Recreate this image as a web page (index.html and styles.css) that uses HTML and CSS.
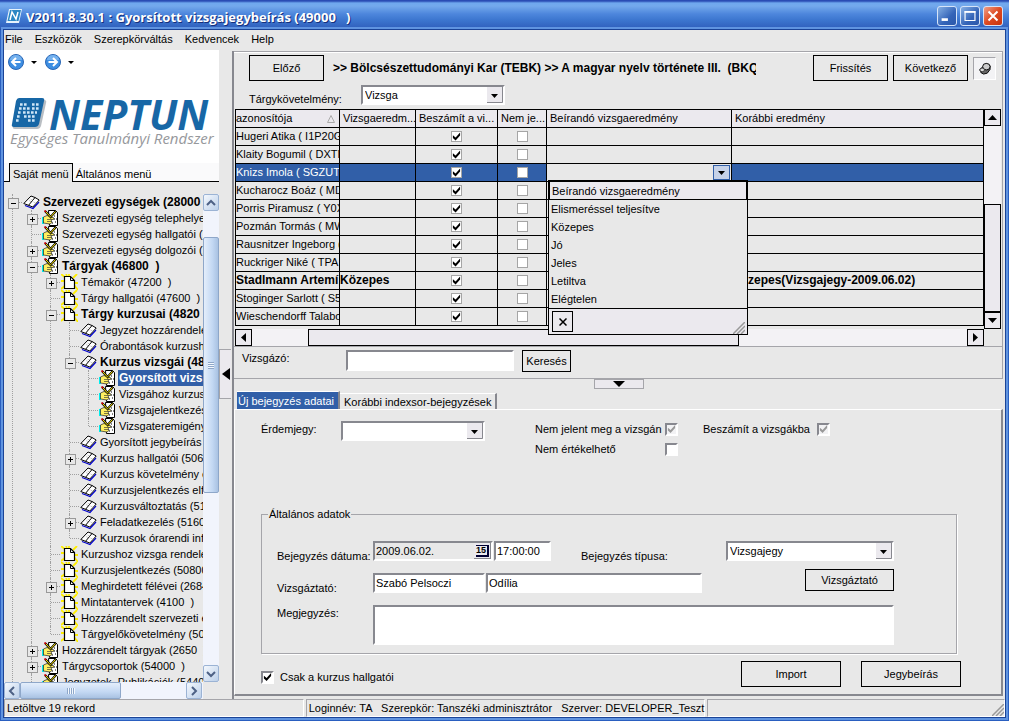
FILE: index.html
```html
<!DOCTYPE html>
<html lang="hu">
<head>
<meta charset="utf-8">
<title>Gyorsított vizsgajegybeírás</title>
<link rel="stylesheet" href="styles.css">
</head>
<body>
<svg class="defs" aria-hidden="true">
  <symbol id="book" viewBox="0 0 17 16">
    <path d="M1 9.500 8.500 2l4 1.500 4 2.500L10 13.500l-4-2z" fill="#fff"/>
    <path d="M2 11.500l4 1.500 4 1.500L16 8" fill="none" stroke="#00c" stroke-width="1.200"/>
    <path d="M.8 9.500 8 2l4 1.500 4.200 2.500L9.800 13 6 11.500zM12 3.500 5.800 11" fill="none" stroke="#000"/>
    <path d="M7.500 5l2 1M6 6.500l2 1M10.500 8l2 1" stroke="#ccc" fill="none"/>
  </symbol>
  <symbol id="sheet" viewBox="0 0 17 16">
    <path d="M0 0l5 4M12 4l4-4M0 7h4M14 9h3M0 15l5-4M13 11l4 5M8 0v2M5 0l1 2" stroke="#ffee00" stroke-width="1.800"/>
    <path d="M3.500 2.500h6l4 4v8h-10z" fill="#fff" stroke="#000" stroke-width="1.200"/>
    <path d="M9.500 2.500v4h4" fill="none" stroke="#000"/>
  </symbol>
  <symbol id="hand" viewBox="0 0 17 16">
    <path d="M6.500.5h7l2 2v13h-8z" fill="#fff" stroke="#000"/>
    <path d="M12 6h2M12 9h3M10 13h2M13 12h2" stroke="#000" stroke-dasharray="1 1"/>
    <path d="M0 7h2v7H0z" fill="#0ee"/>
    <path d="M1.500 7 5 5.500l7 2.500-.5 1.500H9l1 3-2 1.500-6.500-1z" fill="#ffef60" stroke="#222" stroke-width=".7"/>
    <path d="M5 9.500h4M5 11.500h5" stroke="#443" stroke-width=".7"/>
    <path d="M3 1l6.500 7M14 1 8.500 7" stroke="#000" stroke-width="2.200"/>
    <path d="M4 2l5 5.500M13.500 1.500 9 6.500" stroke="#ffe800"/>
    <path d="M2.500.5 4 2" stroke="#d00" stroke-width="1.500"/>
  </symbol>
</svg>

<header class="titlebar">
  <svg class="app-icon" viewBox="0 0 16 14" aria-hidden="true"><path d="M3 0h13l-3 14H0z" fill="#e6f3fc"/><path d="M4 1h11l-2.500 11H1.500z" fill="#2b87c4"/><path d="M4 11 6 3l4 7 2-7" fill="none" stroke="#fff" stroke-width="1.500"/></svg>
  <h1 class="title">V2011.8.30.1 : Gyorsított vizsgajegybeírás (49000   )</h1>
  <button class="win-btn" aria-label="Kis méret"><svg viewBox="0 0 20 20"><path d="M4 14h7" stroke="#fff" stroke-width="3"/></svg></button>
  <button class="win-btn" aria-label="Teljes méret"><svg viewBox="0 0 20 20"><path d="M4.500 5h11v10h-11z" fill="none" stroke="#fff" stroke-width="1.300"/><path d="M4 5.500h12" stroke="#fff" stroke-width="2"/></svg></button>
  <button class="win-btn close" aria-label="Bezárás"><svg viewBox="0 0 20 20"><path d="M5 5l10 10M15 5 5 15" stroke="#fff" stroke-width="2.200"/></svg></button>
</header>

<div class="window">
  <nav class="menubar"><a href="#">File</a><a href="#">Eszközök</a><a href="#">Szerepkörváltás</a><a href="#">Kedvencek</a><a href="#">Help</a></nav>

  <div class="workspace">
    <aside class="sidebar">
      <div class="brand">
        <div class="history">
          <button class="round" aria-label="Vissza"><svg viewBox="0 0 16 16"><circle cx="8" cy="8" r="7.500" fill="#3d8ee2" stroke="#2a66b5"/><path d="M2 6a6 5 0 0 1 12 0" fill="#8cc0f4" opacity=".7"/><path d="M12.500 8H4.500M8 4 4 8l4 4" fill="none" stroke="#fff" stroke-width="2"/></svg></button>
          <span class="caret"></span>
          <button class="round" aria-label="Előre"><svg viewBox="0 0 16 16"><circle cx="8" cy="8" r="7.500" fill="#3d8ee2" stroke="#2a66b5"/><path d="M2 6a6 5 0 0 1 12 0" fill="#8cc0f4" opacity=".7"/><path d="M3.500 8h8M8 4l4 4-4 4" fill="none" stroke="#fff" stroke-width="2"/></svg></button>
          <span class="caret"></span>
        </div>
        <div class="logo">
          <svg viewBox="0 0 36 32" aria-hidden="true">
            <path d="M9 2h24q3 0 2 3l-5 23q-1 3-4 3H4q-3 0-2-3L6 5q1-3 3-3z" fill="#b9bec3"/>
            <path d="M8 0h23q3 0 2 3l-5 23q-1 3-4 3H3q-3 0-2-3L5 3q1-3 3-3z" fill="#1767a6"/>
            <g stroke="#cfe6f7" stroke-width="2.600" stroke-dasharray="2.600 1.400"><path d="M9 6.500h7M21 6.500h7M8 10.500h11M21 10.500h7M7 14.500h3M12 14.500h14M6 18.500h3M13 18.500h12M5 22.500h3M17 22.500h7"/></g>
          </svg>
          <span class="wordmark">NEPTUN</span>
        </div>
        <div class="tagline">Egységes Tanulmányi Rendszer</div>
      </div>
      <div class="side-tabs"><button class="side-tab active">Saját menü</button><button class="side-tab">Általános menü</button></div>
      <div class="tree-frame">
        <div class="tree-view">
          <ul class="tree">
            <li><div class="node bold"><span class="box minus"></span><svg><use href="#book"/></svg><a href="#">Szervezeti egységek (28000</a></div>
              <ul>
                <li><div class="node"><span class="box plus"></span><svg><use href="#hand"/></svg><a href="#">Szervezeti egység telephelyei</a></div></li>
                <li><div class="node"><span class="box"></span><svg><use href="#hand"/></svg><a href="#">Szervezeti egység hallgatói (2</a></div></li>
                <li><div class="node"><span class="box plus"></span><svg><use href="#hand"/></svg><a href="#">Szervezeti egység dolgozói (2</a></div></li>
                <li><div class="node bold"><span class="box minus"></span><svg><use href="#hand"/></svg><a href="#">Tárgyak (46800  )</a></div>
                  <ul>
                    <li><div class="node"><span class="box plus"></span><svg><use href="#sheet"/></svg><a href="#">Témakör (47200  )</a></div></li>
                    <li><div class="node"><span class="box"></span><svg><use href="#sheet"/></svg><a href="#">Tárgy hallgatói (47600  )</a></div></li>
                    <li><div class="node bold"><span class="box minus"></span><svg><use href="#sheet"/></svg><a href="#">Tárgy kurzusai (4820</a></div>
                      <ul>
                        <li><div class="node"><span class="box"></span><svg><use href="#book"/></svg><a href="#">Jegyzet hozzárendelé</a></div></li>
                        <li><div class="node"><span class="box"></span><svg><use href="#book"/></svg><a href="#">Órabontások kurzush</a></div></li>
                        <li><div class="node bold"><span class="box minus"></span><svg><use href="#book"/></svg><a href="#">Kurzus vizsgái (48</a></div>
                          <ul>
                            <li><div class="node bold selected"><span class="box"></span><svg><use href="#hand"/></svg><a href="#">Gyorsított vizs</a></div></li>
                            <li><div class="node"><span class="box"></span><svg><use href="#hand"/></svg><a href="#">Vizsgához kurzus</a></div></li>
                            <li><div class="node"><span class="box"></span><svg><use href="#hand"/></svg><a href="#">Vizsgajelentkezés</a></div></li>
                            <li><div class="node"><span class="box"></span><svg><use href="#hand"/></svg><a href="#">Vizsgateremigény</a></div></li>
                          </ul>
                        </li>
                        <li><div class="node"><span class="box"></span><svg><use href="#book"/></svg><a href="#">Gyorsított jegybeírás</a></div></li>
                        <li><div class="node"><span class="box plus"></span><svg><use href="#book"/></svg><a href="#">Kurzus hallgatói (5060</a></div></li>
                        <li><div class="node"><span class="box"></span><svg><use href="#book"/></svg><a href="#">Kurzus követelmény e</a></div></li>
                        <li><div class="node"><span class="box"></span><svg><use href="#book"/></svg><a href="#">Kurzusjelentkezés elf</a></div></li>
                        <li><div class="node"><span class="box"></span><svg><use href="#book"/></svg><a href="#">Kurzusváltoztatás (51</a></div></li>
                        <li><div class="node"><span class="box plus"></span><svg><use href="#book"/></svg><a href="#">Feladatkezelés (5160</a></div></li>
                        <li><div class="node"><span class="box"></span><svg><use href="#book"/></svg><a href="#">Kurzusok órarendi inf</a></div></li>
                      </ul>
                    </li>
                    <li><div class="node"><span class="box"></span><svg><use href="#sheet"/></svg><a href="#">Kurzushoz vizsga rendelé</a></div></li>
                    <li><div class="node"><span class="box"></span><svg><use href="#sheet"/></svg><a href="#">Kurzusjelentkezés (50800</a></div></li>
                    <li><div class="node"><span class="box plus"></span><svg><use href="#sheet"/></svg><a href="#">Meghirdetett félévei (2684</a></div></li>
                    <li><div class="node"><span class="box"></span><svg><use href="#sheet"/></svg><a href="#">Mintatantervek (4100  )</a></div></li>
                    <li><div class="node"><span class="box"></span><svg><use href="#sheet"/></svg><a href="#">Hozzárendelt szervezeti e</a></div></li>
                    <li><div class="node"><span class="box"></span><svg><use href="#sheet"/></svg><a href="#">Tárgyelőkövetelmény (50</a></div></li>
                  </ul>
                </li>
                <li><div class="node"><span class="box plus"></span><svg><use href="#hand"/></svg><a href="#">Hozzárendelt tárgyak (2650  )</a></div></li>
                <li><div class="node"><span class="box plus"></span><svg><use href="#hand"/></svg><a href="#">Tárgycsoportok (54000  )</a></div></li>
                <li><div class="node"><span class="box"></span><svg><use href="#hand"/></svg><a href="#">Jegyzetek, Publikációk (5440</a></div></li>
                <li></li>
              </ul>
            </li>
            <li></li>
          </ul>
        </div>
        <div class="xp-v">
          <button class="xp-btn" aria-label="Fel"><svg viewBox="0 0 10 10"><path d="M1 7l4-4 4 4" fill="none" stroke="#4d6185" stroke-width="2"/></svg></button>
          <div class="xp-gap-top"></div>
          <div class="xp-thumb-v"><i></i></div>
          <div class="xp-rest"></div>
          <button class="xp-btn" aria-label="Le"><svg viewBox="0 0 10 10"><path d="M1 3l4 4 4-4" fill="none" stroke="#4d6185" stroke-width="2"/></svg></button>
        </div>
        <div class="xp-h">
          <button class="xp-btn" aria-label="Balra"><svg viewBox="0 0 10 10"><path d="M7 1 3 5l4 4" fill="none" stroke="#4d6185" stroke-width="2"/></svg></button>
          <div class="xp-thumb-h"><i></i></div>
          <div class="xp-rest"></div>
          <button class="xp-btn" aria-label="Jobbra"><svg viewBox="0 0 10 10"><path d="M3 1l4 4-4 4" fill="none" stroke="#4d6185" stroke-width="2"/></svg></button>
        </div>
      </div>
    </aside>

    <div class="splitter"><button class="split-left" aria-label="Menü elrejtése"><svg viewBox="0 0 8 12"><path d="M8 0v12L0 6z"/></svg></button></div>

    <main class="content">
      <section class="upper">
        <div class="toolbar">
          <button class="btn tall">Előző</button>
          <strong class="path">&gt;&gt; Bölcsészettudományi Kar (TEBK) &gt;&gt; A magyar nyelv története III.  (BKQ</strong>
          <button class="btn tall">Frissítés</button>
          <button class="btn tall">Következő</button>
          <button class="pin" aria-label="Rögzítés"><svg viewBox="0 0 14 14"><path d="M2 8q0 4 4 5l4-1 3-4V4L9 2z" fill="#666" stroke="#000"/><ellipse cx="9" cy="5" rx="4" ry="3.500" fill="#ccc" stroke="#000"/><ellipse cx="4.500" cy="8.500" rx="2.500" ry="2" fill="#ddd" stroke="#333"/></svg></button>
        </div>
        <div class="filter"><label for="req">Tárgykövetelmény:</label><select id="req" class="combo"><option>Vizsga</option></select></div>

        <div class="grid-frame">
          <table class="grid">
            <colgroup><col class="c1"><col class="c2"><col class="c3"><col class="c4"><col class="c5"><col></colgroup>
            <thead><tr><th class="sorted">azonosítója<svg viewBox="0 0 8 8" aria-hidden="true"><path d="M.5 7.500h7L4 .5z" fill="none" stroke="#aaa"/></svg></th><th>Vizsgaeredm...</th><th>Beszámít a vi...</th><th>Nem je...</th><th>Beírandó vizsgaeredmény</th><th>Korábbi eredmény</th></tr></thead>
            <tbody>
              <tr><td>Hugeri Atika ( I1P20G</td><td></td><td class="mid"><input type="checkbox" class="cell-cb" aria-label="Beszámít" checked></td><td class="mid"><input type="checkbox" class="cell-cb" aria-label="Nem jelent meg"></td><td></td><td></td></tr>
              <tr><td>Klaity Bogumil ( DXTN</td><td></td><td class="mid"><input type="checkbox" class="cell-cb" aria-label="Beszámít" checked></td><td class="mid"><input type="checkbox" class="cell-cb" aria-label="Nem jelent meg"></td><td></td><td></td></tr>
              <tr class="current"><td>Knizs Imola ( SGZUT8</td><td></td><td class="mid"><input type="checkbox" class="cell-cb" aria-label="Beszámít" checked></td><td class="mid"><input type="checkbox" class="cell-cb" aria-label="Nem jelent meg"></td>
                <td class="editing"><button class="cell-drop" aria-label="Lista"><svg viewBox="0 0 7 4"><path d="M0 0h7L3.500 4z"/></svg></button>
                  <div class="popup">
                    <div class="popup-head">Beírandó vizsgaeredmény</div>
                    <ul class="options"><li>Elismeréssel teljesítve</li><li>Közepes</li><li>Jó</li><li>Jeles</li><li>Letiltva</li><li>Elégtelen</li></ul>
                    <div class="popup-foot"><button class="popup-x" aria-label="Bezárás"><svg viewBox="0 0 8 8"><path d="M.5.5l7 7M7.500.5l-7 7" stroke="#000" stroke-width="1.500"/></svg></button><svg class="grip" viewBox="0 0 12 12"><path d="M0 12 12 0M4 12l8-8M8 12l4-4" stroke="#999" stroke-width="1.500"/></svg></div>
                  </div></td><td></td></tr>
              <tr><td>Kucharocz Boáz ( MD</td><td></td><td class="mid"><input type="checkbox" class="cell-cb" aria-label="Beszámít" checked></td><td class="mid"><input type="checkbox" class="cell-cb" aria-label="Nem jelent meg"></td><td></td><td></td></tr>
              <tr><td>Porris Piramusz ( Y0XI</td><td></td><td class="mid"><input type="checkbox" class="cell-cb" aria-label="Beszámít" checked></td><td class="mid"><input type="checkbox" class="cell-cb" aria-label="Nem jelent meg"></td><td></td><td></td></tr>
              <tr><td>Pozmán Tormás ( MW</td><td></td><td class="mid"><input type="checkbox" class="cell-cb" aria-label="Beszámít" checked></td><td class="mid"><input type="checkbox" class="cell-cb" aria-label="Nem jelent meg"></td><td></td><td></td></tr>
              <tr><td>Rausnitzer Ingeborg (</td><td></td><td class="mid"><input type="checkbox" class="cell-cb" aria-label="Beszámít" checked></td><td class="mid"><input type="checkbox" class="cell-cb" aria-label="Nem jelent meg"></td><td></td><td></td></tr>
              <tr><td>Ruckriger Niké ( TPA</td><td></td><td class="mid"><input type="checkbox" class="cell-cb" aria-label="Beszámít" checked></td><td class="mid"><input type="checkbox" class="cell-cb" aria-label="Nem jelent meg"></td><td></td><td></td></tr>
              <tr class="strong"><td>Stadlmann Artemí:</td><td>Közepes</td><td class="mid"><input type="checkbox" class="cell-cb" aria-label="Beszámít" checked></td><td class="mid"><input type="checkbox" class="cell-cb" aria-label="Nem jelent meg"></td><td></td><td class="late">zepes(Vizsgajegy-2009.06.02)</td></tr>
              <tr><td>Stoginger Sarlott ( S5I</td><td></td><td class="mid"><input type="checkbox" class="cell-cb" aria-label="Beszámít" checked></td><td class="mid"><input type="checkbox" class="cell-cb" aria-label="Nem jelent meg"></td><td></td><td></td></tr>
              <tr><td>Wieschendorff Talabo</td><td></td><td class="mid"><input type="checkbox" class="cell-cb" aria-label="Beszámít" checked></td><td class="mid"><input type="checkbox" class="cell-cb" aria-label="Nem jelent meg"></td><td></td><td></td></tr>
            </tbody>
          </table>
          <div class="bar-v">
            <button class="sq" aria-label="Fel"><svg viewBox="0 0 9 5"><path d="M0 5h9L4.500 0z"/></svg></button>
            <div class="track-v"></div><div class="thumb-v"></div>
            <button class="sq" aria-label="Le"><svg viewBox="0 0 9 5"><path d="M0 0h9L4.500 5z"/></svg></button>
          </div>
          <div class="bar-h">
            <button class="sq" aria-label="Balra"><svg viewBox="0 0 5 9"><path d="M5 0v9L0 4.500z"/></svg></button>
            <div class="track-h"></div><div class="thumb-h"></div><div class="track-rest"></div>
            <button class="sq" aria-label="Jobbra"><svg viewBox="0 0 5 9"><path d="M0 0v9l5-4.500z"/></svg></button>
          </div>
        </div>
        <div class="search"><label for="cand">Vizsgázó:</label><input id="cand" class="field" type="text"><button class="btn">Keresés</button></div>
      </section>

      <div class="fold"><button aria-label="Lenyitás"><svg viewBox="0 0 12 6"><path d="M0 0h12L6 6z"/></svg></button></div>

      <section class="lower">
        <div class="tabs"><button class="tab on">Új bejegyzés adatai</button><button class="tab">Korábbi indexsor-bejegyzések</button></div>
        <div class="page">
          <div class="marks">
            <label for="mark">Érdemjegy:</label><select id="mark" class="combo"><option></option></select>
            <label for="absent">Nem jelent meg a vizsgán</label><input id="absent" class="cb" type="checkbox" checked disabled>
            <label for="counts">Beszámít a vizsgákba</label><input id="counts" class="cb" type="checkbox" checked disabled>
            <label for="none" class="second">Nem értékelhető</label><input id="none" class="cb" type="checkbox">
          </div>
          <fieldset class="general">
            <legend>Általános adatok</legend>
            <div class="line">
              <label class="name low" for="date">Bejegyzés dátuma:</label>
              <span class="datebox field"><input id="date" type="text" value="2009.06.02."><button aria-label="Naptár"><span>15</span></button></span>
              <input class="field time" type="text" value="17:00:00" aria-label="Időpont">
              <label class="kind low" for="kind">Bejegyzés típusa:</label>
              <select id="kind" class="combo wide"><option>Vizsgajegy</option></select>
            </div>
            <div class="line">
              <label class="name low" for="exam">Vizsgáztató:</label>
              <input id="exam" class="field surname" type="text" value="Szabó Pelsoczi">
              <input class="field given" type="text" value="Odília" aria-label="Keresztnév">
              <button class="btn examiner">Vizsgáztató</button>
            </div>
            <div class="line">
              <label class="name" for="note">Megjegyzés:</label>
              <textarea id="note" class="field"></textarea>
            </div>
          </fieldset>
          <div class="actions">
            <input id="only" class="cb" type="checkbox" checked><label for="only">Csak a kurzus hallgatói</label>
            <button class="btn big">Import</button><button class="btn big">Jegybeírás</button>
          </div>
        </div>
      </section>
    </main>
  </div>

  <footer class="status"><span class="s1">Letöltve 19 rekord</span><span class="s2">Loginnév: TA   Szerepkör: Tanszéki adminisztrátor   Szerver: DEVELOPER_Teszt</span><span class="s3"><svg class="grip" viewBox="0 0 12 12"><path d="M0 12 12 0M4 12l8-8M8 12l4-4" stroke="#999" stroke-width="1.500"/></svg></span></footer>
</div>
</body>
</html>
```
FILE: styles.css
```css
:root {
  --face: #e8e8e8;
  --soft: #ebe9ee;
  --blue: #315fa8;
  --shade: #87888f;
  --line: #a5a5aa;
}

* { box-sizing: border-box; }

body {
  margin: 0;
  height: 100vh;
  display: flex;
  flex-direction: column;
  overflow: hidden;
  background: #2a5fc0;
  color: #000;
  font: 11px/16px "Liberation Sans", Arial, sans-serif;
}

button, input, select, textarea { font: inherit; color: inherit; margin: 0; padding: 0; border-radius: 0; }
button { display: flex; align-items: center; justify-content: center; background: none; border: 0; white-space: nowrap; }
a { color: inherit; text-decoration: none; }
ul { list-style: none; margin: 0; padding: 0; }
label { white-space: nowrap; }
.defs { display: none; }

/* title bar */
.titlebar {
  flex: none;
  height: 30px;
  display: flex;
  align-items: center;
  gap: 3px;
  padding: 2px 6px 0;
  background: linear-gradient(#2a4cb4 0, #2a4cb4 1px, #6fa8ee 3px, #74a9ec 6px, #4d86dc 14px, #3c76cf 20px, #3060bd 28px, #2449a0);
}
.app-icon { width: 16px; height: 14px; }
.title {
  flex: 1;
  margin: 0;
  padding: 2px 0 0 1px;
  color: #fff;
  font: bold 13px/20px "Open Sans", sans-serif;
  text-shadow: 1px 1px 0 #16307c;
  white-space: pre;
}
.win-btn {
  width: 20px;
  height: 20px;
  border: 1px solid #d6e4f8;
  border-radius: 3px;
  background: linear-gradient(135deg, #86b0e4, #3464b8 60%, #2c58aa);
}
.win-btn.close { background: linear-gradient(135deg, #f0a088, #dd4a22 50%, #c8340e); }

.window {
  flex: 1;
  min-height: 0;
  display: flex;
  flex-direction: column;
  margin: 0 4px 4px;
  background: var(--face);
  box-shadow: 0 0 0 1px #1b4497, 0 0 0 3px #6094e0;
}
.menubar { flex: none; height: 20px; display: flex; gap: 12px; padding: 1px 1px 0; }

.workspace { flex: 1; min-height: 0; display: flex; }

/* sidebar */
.sidebar { flex: none; width: 215px; display: flex; flex-direction: column; }
.brand { flex: none; height: 113px; background: #fff; padding: 4px 0 0 4px; }
.history { display: flex; align-items: center; height: 16px; }
.round { width: 16px; height: 16px; }
.round svg, .win-btn svg { width: 100%; height: 100%; display: block; }
.caret { margin: 0 8px 0 7px; border: 3px solid transparent; border-top-color: #000; border-bottom: 0; }
.logo { display: flex; align-items: center; height: 32px; margin: 28px 0 0 3px; }
.logo svg { width: 36px; height: 32px; }
.wordmark { margin-left: 2px; color: #1767a6; font: italic bold 41px/28px "Open Sans", sans-serif; }
.tagline { margin-left: 2px; color: #96989c; font: italic 15px/16px "Open Sans", sans-serif; white-space: nowrap; }

.side-tabs { flex: none; height: 19px; display: flex; background: #fafafb; box-shadow: inset 0 -1px #000; padding-left: 5px; }
.side-tab { padding: 2px 3px 0; }
.side-tab.active { background: var(--face); border: 1px solid #000; border-bottom: 0; }

.tree-frame {
  flex: 1;
  min-height: 0;
  display: grid;
  grid-template: minmax(0, 1fr) 17px / minmax(0, 1fr) 16px;
  padding-top: 12px;
}
.tree-view { overflow: hidden; padding: 0 1px 0 4px; }
.tree li { position: relative; }
.tree li::before {
  content: "";
  position: absolute;
  left: 4px;
  top: 0;
  height: 100%;
  border-left: 1px dotted #a0a0a0;
}
.tree ul { padding-left: 19px; }
.tree ul ul li:last-child::before { height: 8px; }
.node { display: flex; align-items: center; height: 16px; }
.node svg { flex: none; width: 17px; height: 16px; }
.node a { margin-left: 2px; padding: 0 1px; white-space: pre; line-height: 16px; }
.bold a { font-weight: bold; font-size: 12px; }
.selected a { flex: 1; background: var(--blue); color: #fff; }
.box { position: relative; flex: none; width: 15px; height: 9px; background: linear-gradient(90deg, #a0a0a0 50%, transparent 50%) 5px 4px / 2px 1px repeat-x; background-clip: content-box; padding-left: 5px; }
.plus::before, .minus::before {
  content: "";
  position: absolute;
  left: 0;
  top: 0;
  width: 9px;
  height: 9px;
  border: 1px solid #999;
  background: linear-gradient(#000, #000) center / 5px 1px no-repeat, var(--face);
}
.plus::before { background: linear-gradient(#000, #000) center / 5px 1px no-repeat, linear-gradient(#000, #000) center / 1px 5px no-repeat, var(--face); }

.xp-v { display: flex; flex-direction: column; background: #f1f4fc; }
.xp-h { display: flex; background: #f1f4fc; }
.xp-btn { flex: none; width: 16px; height: 17px; border: 1px solid #9bb3d4; border-radius: 2px; background: linear-gradient(135deg, #f4f8fd, #bcd0ea); }
.xp-btn svg { width: 10px; height: 10px; }
.xp-gap-top { height: 26px; }
.xp-thumb-v { height: 256px; display: flex; align-items: center; justify-content: center; border: 1px solid #8ea7c9; border-radius: 2px; background: linear-gradient(90deg, #e4eefb, #c3d8f3 60%, #a9c2e2); }
.xp-thumb-v i { width: 6px; height: 7px; background: repeating-linear-gradient(#8ea7c9 0 1px, #f4f8fd 1px 2px); }
.xp-thumb-h { width: 101px; display: flex; align-items: center; justify-content: center; border: 1px solid #8ea7c9; border-radius: 2px; background: linear-gradient(#e4eefb, #c3d8f3 60%, #a9c2e2); }
.xp-thumb-h i { width: 8px; height: 6px; background: repeating-linear-gradient(90deg, #8ea7c9 0 1px, #f4f8fd 1px 2px); }
.xp-rest { flex: 1; }
.xp-h { padding-right: 1px; }

.splitter { flex: none; width: 13px; padding-top: 299px; }
.split-left { width: 12px; height: 50px; border: 1px solid var(--line); border-right: 0; background: var(--soft); }
.split-left svg { width: 8px; height: 12px; }

/* right side */
.content { flex: 1; min-width: 0; display: flex; flex-direction: column; margin: 1px 2px 0 0; border-left: 2px solid var(--shade); }
.upper { flex: none; border: 1px solid var(--line); border-left: 0; box-shadow: inset 0 1px #fff; }
.toolbar { display: flex; align-items: center; gap: 5px; height: 33px; padding: 3px 6px 4px 15px; }
.btn { flex: none; height: 22px; border: 1px solid #000; background: var(--face); }
.tall { width: 75px; height: 26px; }
.path { flex: 1; overflow: hidden; padding: 0 0 0 4px; margin-right: 52px; font-size: 12px; white-space: pre; }
.pin { width: 23px; height: 23px; border: 1px solid #fff; border-top-color: var(--line); border-left-color: var(--line); background: #f3f3f5; }
.pin svg { width: 13px; height: 13px; }
.filter { display: flex; height: 24px; padding-left: 15px; }
.filter label { width: 112px; padding-top: 6px; }

.field, .combo, .cb {
  border: 2px solid;
  border-color: var(--shade) #fff #fff var(--shade);
  background-color: #fff;
  outline: 0;
}
.combo {
  appearance: none;
  width: 144px;
  height: 20px;
  padding-left: 2px;
  background-image: url("data:image/svg+xml,%3Csvg xmlns='http://www.w3.org/2000/svg' width='16' height='16'%3E%3Cpath d='M0 0h16v16H0z' fill='%23ebe9ee'/%3E%3Cpath d='M0 15.500h15.500V0' fill='none' stroke='%2387888f'/%3E%3Cpath d='M4 7h7l-3.500 4z'/%3E%3C/svg%3E");
  background-repeat: no-repeat;
  background-position: right center;
}

.grid-frame { display: grid; grid-template: auto 17px / minmax(0, 1fr) 17px; row-gap: 3px; padding: 0 1px 0; margin-bottom: 1px; border-bottom: 1px solid var(--line); }
.grid { width: 100%; table-layout: fixed; border-collapse: separate; border-spacing: 0; border: solid #000; border-width: 1px 0 0 1px; }
.c1 { width: 104px; } .c2 { width: 76px; } .c3 { width: 82px; } .c4 { width: 49px; } .c5 { width: 185px; }
.grid th, .grid td { height: 18px; padding: 0 0 1px 0; border: solid #000; border-width: 0 1px 1px 0; line-height: 16px; overflow: hidden; white-space: nowrap; text-align: left; font-weight: normal; }
.grid th { background: var(--soft); padding-left: 3px; }
.grid th.sorted { padding-left: 0; }
.sorted svg { width: 8px; height: 8px; float: right; margin: 5px 4px 0 0; }
.grid td.mid { text-align: center; padding: 0; }
.grid tr.strong td { font-weight: bold; font-size: 12px; }
.grid td.late { padding-left: 16px; }
.current td { background: var(--blue); color: #fff; }
.grid td.editing { position: relative; overflow: visible; background: var(--face); color: #000; padding: 0; }
.cell-drop { width: 17px; height: 15px; margin: 0 1px 0 auto; border: 1px solid var(--blue); background: #c6d2e8; }
.cell-drop svg { width: 7px; height: 4px; }

.cell-cb { appearance: none; display: block; width: 11px; height: 11px; margin: 0 auto; border: 1px solid #a5a5a5; background: #fff; }
.cell-cb:checked::before, .cb:checked::before {
  content: "";
  display: block;
  width: 9px;
  height: 9px;
  background: #000;
  clip-path: polygon(10% 35%, 40% 60%, 90% 5%, 90% 38%, 40% 95%, 10% 68%);
}
.cb { appearance: none; flex: none; width: 13px; height: 13px; }
.cb:disabled { background: #f2f2f4; }
.cb:disabled::before { background: #999; }

.popup { position: absolute; z-index: 2; left: 1px; top: 16px; width: 200px; border: 1px solid #000; background: var(--face); }
.popup-head { height: 19px; padding-left: 2px; border: 1px solid #000; background: var(--soft); line-height: 18px; }
.options li { height: 18px; padding-left: 2px; line-height: 18px; }
.popup-foot { display: flex; align-items: center; justify-content: space-between; height: 26px; padding: 0 2px 0 3px; border-top: 1px solid #000; background: var(--soft); }
.popup-x { width: 21px; height: 21px; border: 1px solid #000; }
.popup-x svg { width: 8px; height: 8px; }
.grip { width: 12px; height: 12px; align-self: flex-end; }

.bar-v { display: flex; flex-direction: column; margin-bottom: -3px; }
.bar-h { display: flex; }
.sq { flex: none; width: 17px; height: 17px; border: 1px solid #000; background: var(--soft); }
.sq svg { width: 9px; height: 9px; }
.track-v, .track-h, .track-rest { background: #f3f2f5; }
.track-v { flex: 78; }
.thumb-v { flex: 107; border: 1px solid #000; background: var(--soft); }
.track-h { flex: 56; }
.thumb-h { flex: 430; border: 1px solid #000; background: var(--soft); }
.track-rest { flex: 229; }
.bar-h { margin-left: 0; }

.search { display: flex; height: 30px; padding: 2px 8px 0; }
.search label { width: 104px; }
.search .field { width: 168px; height: 21px; margin-right: 8px; }
.search .btn { width: 49px; }

.fold { flex: none; display: flex; justify-content: center; height: 12px; }
.fold button { width: 50px; height: 10px; border: 1px solid var(--line); background: var(--soft); }
.fold svg { width: 12px; height: 6px; }

.lower { flex: 1; min-height: 0; display: flex; flex-direction: column; margin-bottom: 3px; }
.tabs { flex: none; display: flex; align-items: flex-end; height: 18px; padding-left: 3px; }
.tab { height: 16px; padding: 0 4px; border-top: 1px solid #fff; border-right: 2px solid var(--shade); }
.tab.on { height: 18px; padding: 0 4px 0 1px; background: var(--blue); color: #fff; }
.page { flex: 1; display: flex; flex-direction: column; border: 1px solid #fff; border-right: 2px solid var(--shade); border-bottom: 2px solid var(--shade); padding: 9px 0 0 26px; }
.marks { display: grid; grid-template-columns: 80px 194px 130px 38px 114px 13px; grid-auto-rows: 20px; align-items: center; }
.marks .combo { align-self: start; margin-top: 2px; }
.marks .second { grid-column: 3; }

.general { display: flex; flex-direction: column; margin: 47px 44px 7px 0; padding: 19px 62px 8px 15px; border: 1px solid var(--line); box-shadow: 1px 1px #fff; min-width: 0; }
.general legend { margin-left: -9px; padding: 0 1px; }
.line { display: flex; height: 32px; }
.line:last-child { height: 40px; }
.name { flex: none; width: 96px; }
.low { padding-top: 7px; }
.line .field { height: 20px; padding-left: 1px; }
.line textarea.field { flex: 1; height: 40px; resize: none; }
.datebox { display: flex; width: 120px; margin-right: 1px; background: var(--face); }
.datebox input { flex: 1; min-width: 0; border: 0; background: none; }
.datebox button { width: 17px; border: solid var(--shade); border-width: 0 1px 1px 0; background: var(--soft); }
.datebox button span { width: 13px; border: 1px solid #003; border-width: 1px 2px 2px 0; font: bold 9px/9px "Liberation Sans", sans-serif; }
.time { width: 57px; margin-right: 30px; }
.wide { width: 168px; margin-left: auto; }
.surname { width: 112px; margin-right: 1px; }
.given { width: 216px; }
.examiner { width: 89px; margin: -4px 0 0 auto; }

.actions { display: flex; align-items: center; height: 26px; margin-right: 40px; }
.actions label { flex: 1; margin-left: 6px; padding-top: 6px; }
.actions .cb { margin-top: 6px; }
.big { width: 100px; height: 26px; }
.big + .big { margin-left: 20px; }

/* status bar */
.status { flex: none; display: flex; gap: 2px; height: 18px; }
.status span { border: 1px solid #fff; border-top-color: var(--line); border-left-color: var(--line); padding-left: 2px; white-space: pre; line-height: 16px; }
.s1 { flex: 300; } .s2 { flex: 399; } .s3 { flex: 298; display: flex; justify-content: flex-end; }
```
